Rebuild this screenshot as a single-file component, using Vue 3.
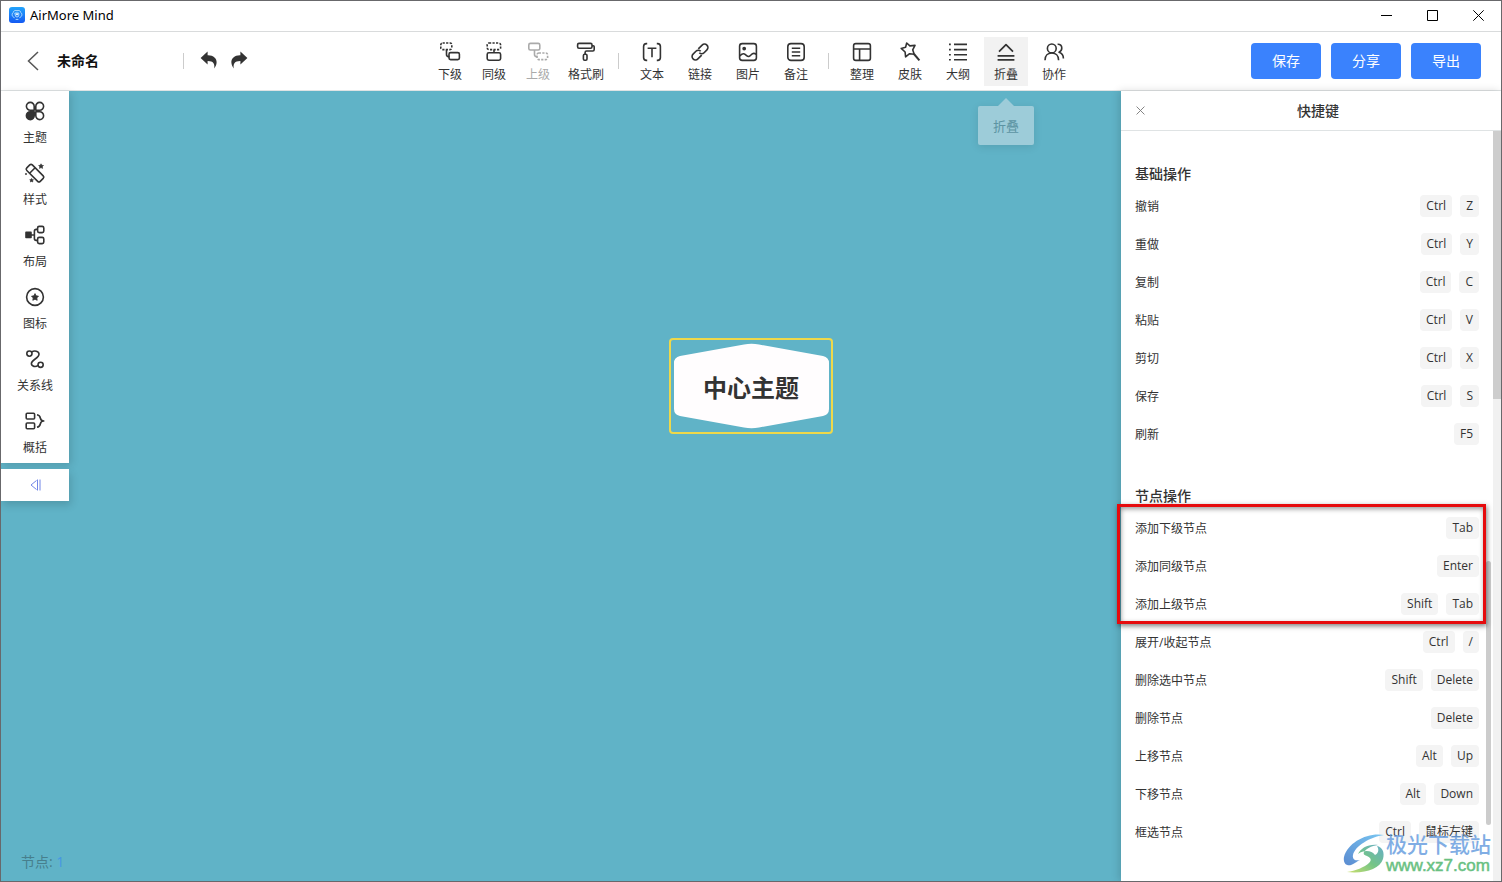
<script setup>
import { ref } from 'vue'

const docName = ref('未命名')

const toolGroups = [
  [
    { id: 'child', label: '下级' },
    { id: 'sibling', label: '同级' },
    { id: 'parent', label: '上级', disabled: true },
    { id: 'brush', label: '格式刷', wide: true },
  ],
  [
    { id: 'text', label: '文本' },
    { id: 'link', label: '链接' },
    { id: 'image', label: '图片' },
    { id: 'note', label: '备注' },
  ],
  [
    { id: 'arrange', label: '整理' },
    { id: 'skin', label: '皮肤' },
    { id: 'outline', label: '大纲' },
    { id: 'fold', label: '折叠', active: true },
    { id: 'team', label: '协作' },
  ],
]

const icons = {
  child:
    '<rect x=".8" y="1" width="11" height="6.6" rx="1.8" stroke-dasharray="2.2 1.3"/><path d="M6.5 7.800v4.800a2 2 0 0 0 2 2h1"/><rect x="9" y="10.600" width="10.400" height="7" rx="1.600"/>',
  sibling:
    '<rect x="3.200" y="1" width="13.400" height="6.600" rx="1.800" stroke-dasharray="2.2 1.3"/><path d="M10 7.800V11"/><rect x="3.200" y="10.800" width="13.400" height="7.400" rx="1.600"/>',
  parent:
    '<rect x=".8" y="1.400" width="11" height="6.600" rx="1.600"/><path d="M6.500 8v4.600a2 2 0 0 0 2 2h1"/><rect x="9" y="11" width="10.600" height="6.600" rx="1.800" stroke-dasharray="2.2 1.3"/>',
  brush:
    '<rect x="1.600" y="1.400" width="14.400" height="4.800" rx="1.400"/><path d="M16 3.800h1.200a1 1 0 0 1 1 1v2.800a1.400 1.400 0 0 1-1.400 1.400h-6.300a1.400 1.400 0 0 0-1.400 1.400V12"/><rect x="7.400" y="12.200" width="3.600" height="6" rx="1.200"/>',
  text:
    '<path d="M5.200 1.600H4.400A3 3 0 0 0 1.600 4.600v10.800a3 3 0 0 0 2.800 3h.8M14.800 1.600h.8a3 3 0 0 1 2.800 3v10.800a3 3 0 0 1-2.800 3h-.8M5.600 6.200h8.800M10 6.200v9"/>',
  link:
    '<g transform="rotate(-45 10 10)"><path d="M9 13.400H3.600a3.400 3.400 0 0 1 0-6.800h4a3.400 3.400 0 0 1 3.400 3.400"/><path d="M11 6.600h5.400a3.400 3.400 0 0 1 0 6.800h-4A3.400 3.400 0 0 1 9 10"/></g>',
  image:
    '<rect x="1.600" y="1.600" width="16.800" height="16.800" rx="2.600"/><circle cx="6.200" cy="6.600" r="1.100" fill="currentColor"/><path d="M1.800 13.800c3.600-3.400 5-1.800 6.800-.2 2 1.800 3.600.4 4.800-1 1.600-2 3.200-1.600 5-.2"/>',
  note:
    '<rect x="1.800" y="1.600" width="16.400" height="16.800" rx="3.200"/><path d="M5.800 6.200h8.400M5.800 10h8.400M5.800 13.800h8.400"/>',
  arrange:
    '<rect x="1.600" y="1.600" width="16.800" height="16.800" rx="2.200"/><path d="M1.600 7h16.800M7.600 7v11.400"/>',
  skin:
    '<path d="M6.700 1 9.900 3.900 15 3.400 12.700 7.800 14.200 12.200 9.600 11.700 5.600 14.800 5.100 10 1.200 6.400 5.600 5.200Z"/><path d="m14 12 5.400 6.400" stroke-width="2"/>',
  outline:
    '<path d="M6 2.400h13M6 7.600h13M6 12.800h13M6 17.800h13M1 2.400h1.800M1 7.600h1.800M1 12.800h1.800M1 17.800h1.800"/>',
  fold: '<path d="m3 9.600 7-7 7 7M1.600 13.800h16.800M1.600 17.800h16.800" stroke-width="1.700"/>',
  team:
    '<circle cx="7.800" cy="6.400" r="4.400"/><path d="M1 18.200c0-4.600 3-7.200 6.800-7.200s6.800 2.600 6.800 7.200M13.600 2.200c2.600-.2 4.200 1.600 4.200 3.800 0 2.400-1.400 3.600-2.800 4.200 2.800.8 4.400 3 4.400 6.200"/>',
}

const sideItems = [
  {
    label: '主题',
    icon: '<path d="M9.200 9.200H5.400A3.900 3.900 0 1 1 9.200 5.400ZM10.800 9.200V5.400a3.900 3.900 0 1 1 3.800 3.800ZM10.800 10.800h3.800a3.900 3.900 0 1 1-3.800 3.800Z"/><path d="M9.200 10.800v3.800a3.900 3.900 0 1 1-3.800-3.800Z" fill="currentColor"/>',
  },
  {
    label: '样式',
    icon: '<g transform="rotate(45 10 10)"><rect x="0.600" y="6.200" width="19" height="7.800" rx="1.800"/><path d="M6.400 6.200v7.800"/></g><path d="m16 .8.8 1.500 1.700.2-1.200 1.200.3 1.700-1.600-.8-1.500.8.300-1.700-1.200-1.200 1.700-.2ZM6.600 15.400l.6 1.200 1.300.2-.9.900.2 1.300-1.200-.6-1.200.6.200-1.300-.9-.9 1.300-.2Z" fill="currentColor" stroke-width=".6"/><circle cx="1" cy="11" r=".7" fill="currentColor" stroke-width=".6"/>',
  },
  {
    label: '布局',
    icon: '<rect x="1" y="7.400" width="5" height="5" fill="currentColor"/><path d="M6 10h3.400M12.600 4.400h-1.400a1.800 1.800 0 0 0-1.800 1.800v7.400a1.800 1.800 0 0 0 1.800 1.800h1.400"/><rect x="12.600" y="1.400" width="6.200" height="6.200" rx="1.600"/><rect x="12.600" y="12.400" width="6.200" height="6.200" rx="1.600"/>',
  },
  {
    label: '图标',
    icon: '<circle cx="10" cy="10" r="8.400"/><path d="m10 6.600 1.100 2.200 2.400.4-1.700 1.700.4 2.400-2.200-1.100-2.200 1.100.4-2.400-1.700-1.700 2.400-.4Z" fill="currentColor" stroke-width=".8"/>',
  },
  {
    label: '关系线',
    icon: '<circle cx="4.400" cy="4.600" r="2.600"/><circle cx="15.600" cy="15.800" r="2.600"/><path d="M6.600 3.200c2.800-2.200 7.200-1 7.400 1.800.3 4.200-7.600 5.600-7.600 9.600 0 3 4.400 3.800 6.600 1.600"/>',
  },
  {
    label: '概括',
    icon: '<rect x="1.200" y="2.200" width="8.400" height="5.800" rx="1"/><rect x="1.200" y="12" width="8.400" height="5.800" rx="1"/><path d="M12 3.800c2.400.4 3 1.600 3.300 3.200.3 1.600.9 3 3.500 3-2.600 0-3.200 1.400-3.500 3-.3 1.600-.9 2.800-3.300 3.200"/>',
  },
]

const basicKeys = [
  { name: '撤销', keys: ['Ctrl', 'Z'] },
  { name: '重做', keys: ['Ctrl', 'Y'] },
  { name: '复制', keys: ['Ctrl', 'C'] },
  { name: '粘贴', keys: ['Ctrl', 'V'] },
  { name: '剪切', keys: ['Ctrl', 'X'] },
  { name: '保存', keys: ['Ctrl', 'S'] },
  { name: '刷新', keys: ['F5'] },
]
const addKeys = [
  { name: '添加下级节点', keys: ['Tab'] },
  { name: '添加同级节点', keys: ['Enter'] },
  { name: '添加上级节点', keys: ['Shift', 'Tab'] },
]
const nodeKeys = [
  { name: '展开/收起节点', keys: ['Ctrl', '/'] },
  { name: '删除选中节点', keys: ['Shift', 'Delete'] },
  { name: '删除节点', keys: ['Delete'] },
  { name: '上移节点', keys: ['Alt', 'Up'] },
  { name: '下移节点', keys: ['Alt', 'Down'] },
  { name: '框选节点', keys: ['Ctrl', '鼠标左键'] },
]
const sections = [
  { title: '基础操作', groups: [{ rows: basicKeys }] },
  { title: '节点操作', groups: [{ rows: addKeys, marked: true }, { rows: nodeKeys }] },
]
</script>

<template>
  <div class="window">
    <header class="titlebar">
      <svg class="app-icon" viewBox="0 0 16 16" aria-hidden="true">
        <defs>
          <linearGradient id="app-bg" x1="0" y1="0" x2="0" y2="1">
            <stop offset="0" stop-color="#21a4fb" />
            <stop offset="1" stop-color="#1459f2" />
          </linearGradient>
        </defs>
        <rect width="16" height="16" rx="3" fill="url(#app-bg)" />
        <g fill="none" stroke="#bfe4ff" stroke-width=".9" stroke-linecap="round">
          <path d="M5.200 10.600C2.600 9.600 2.600 6.600 4.200 5.600 4.400 3.600 6.600 3 8 3.800c1.400-.8 3.600-.2 3.800 1.800 1.600 1 1.600 4-1 5" />
          <path d="M6.200 6h3.600v2.200a1.800 1.800 0 0 1-3.600 0ZM7 12.400h2" />
        </g>
        <path d="M6.800 6.400h2.400v1.800H6.800z" fill="#e6f5ff" />
      </svg>
      <span class="app-name">AirMore Mind</span>
      <div class="window-controls">
        <button type="button" aria-label="最小化">
          <svg viewBox="0 0 11 11"><path d="M0 5.500h11" /></svg>
        </button>
        <button type="button" aria-label="最大化">
          <svg viewBox="0 0 11 11"><path d="M.5.5h10v10H.5z" /></svg>
        </button>
        <button type="button" aria-label="关闭">
          <svg viewBox="0 0 11 11"><path d="m.3.300 10.400 10.400M10.700.3.300 10.700" /></svg>
        </button>
      </div>
    </header>

    <div class="toolbar">
      <div class="doc">
        <button class="back" type="button" aria-label="返回">
          <svg viewBox="0 0 12 20"><path d="M11 1 1.500 10 11 19" /></svg>
        </button>
        <input v-model="docName" class="doc-name" type="text" aria-label="文件名" />
        <span class="divider"></span>
        <button class="history" type="button" aria-label="撤销">
          <svg viewBox="0 0 18 18">
            <path d="M7.600.6v3.600c5.600-.2 9.400 3 9 7.600-.2 2-1 4-2.400 5.600.8-4.600-1-7.400-6.600-7.300v3.500L.6 7.100Z" />
          </svg>
        </button>
        <button class="history" type="button" aria-label="重做">
          <svg viewBox="0 0 18 18">
            <path d="M10.400.6v3.600c-5.600-.2-9.400 3-9 7.600.2 2 1 4 2.400 5.600-.8-4.600 1-7.400 6.600-7.300v3.500l7-6.500Z" />
          </svg>
        </button>
      </div>

      <nav class="tools" aria-label="工具">
        <template v-for="(group, g) in toolGroups" :key="g">
          <span v-if="g > 0" class="divider"></span>
          <div class="tool-group" :class="{ spaced: g > 0 }">
            <div v-for="tool in group" :key="tool.id" class="tool-slot" :class="{ wide: tool.wide }">
              <button class="tool" :class="{ active: tool.active }" type="button" :disabled="tool.disabled">
                <svg viewBox="0 0 20 20" v-html="icons[tool.id]"></svg>
                <span>{{ tool.label }}</span>
              </button>
              <div v-if="tool.active" class="tooltip" role="tooltip">{{ tool.label }}</div>
            </div>
          </div>
        </template>
      </nav>

      <div class="actions">
        <button type="button">保存</button>
        <button type="button">分享</button>
        <button type="button">导出</button>
      </div>
    </div>

    <main class="workspace">
      <div class="side">
        <nav class="side-menu" aria-label="侧栏">
          <button v-for="item in sideItems" :key="item.label" type="button">
            <svg viewBox="0 0 20 20" v-html="item.icon"></svg>
            <span>{{ item.label }}</span>
          </button>
        </nav>
        <button class="collapse" type="button" aria-label="收起侧栏">
          <svg viewBox="0 0 11 12"><path d="M6.500 1.500 1 6l5.500 4.500M7.500.5v11M10 .5v11" /></svg>
        </button>
      </div>

      <div class="node">
        <svg viewBox="0 0 155 86" preserveAspectRatio="none" aria-hidden="true">
          <path d="M6 13 70 1.500Q77.500 0 85 1.500L149 13Q155 14.500 155 20V66Q155 71.500 149 73L85 84.500Q77.500 86 70 84.500L6 73Q0 71.500 0 66V20Q0 14.500 6 13Z" />
        </svg>
        <span>中心主题</span>
      </div>

      <p class="count">节点: <b>1</b></p>

      <aside class="panel">
        <div class="panel-head">
          <button type="button" aria-label="关闭面板">
            <svg viewBox="0 0 8 8"><path d="m.5.500 7 7M7.500.5l-7 7" /></svg>
          </button>
          <h2>快捷键</h2>
        </div>
        <div class="panel-body">
          <div class="shortcuts">
            <section v-for="section in sections" :key="section.title">
              <h3>{{ section.title }}</h3>
              <div v-for="(group, i) in section.groups" :key="i" :class="{ marked: group.marked }">
                <div v-for="row in group.rows" :key="row.name" class="row">
                  <span class="row-name">{{ row.name }}</span>
                  <span class="keys"><kbd v-for="k in row.keys" :key="k">{{ k }}</kbd></span>
                </div>
              </div>
            </section>
          </div>
          <div class="inner-thumb"></div>
          <div class="scroll-track"><div class="scroll-thumb"></div></div>
        </div>
      </aside>

      <div class="watermark">
        <svg viewBox="0 0 42 42" aria-hidden="true">
          <defs>
            <linearGradient id="wm-blue" x1="0" y1="1" x2="1" y2="0">
              <stop offset="0" stop-color="#3f78c9" />
              <stop offset="1" stop-color="#62bdf0" />
            </linearGradient>
            <linearGradient id="wm-green" x1="0" y1="1" x2="1" y2="0">
              <stop offset="0" stop-color="#c3da55" />
              <stop offset=".5" stop-color="#5cbb72" />
              <stop offset="1" stop-color="#4c9fc0" />
            </linearGradient>
          </defs>
          <path d="M41 2C25-1 5 9 1 24c-1 6 2 9 7 8 5-2 6-4 9-5-4 1-8 0-7-5C12 13 27 4 41 2Z" fill="url(#wm-blue)" />
          <path d="M15 21c3-6 10-10 20-9-7 1-12 4-14 7-1 2 0 3 3 4 4 2 5 4 2 7-4 4-14 8-22 9 17 2 33-3 36-13 2-7-1-12-6-13 2 3 2 7-2 9-3-4-10-6-17-1Z" fill="url(#wm-green)" />
        </svg>
        <div>
          <span class="wm-name">极光下载站</span>
          <span class="wm-url">www.xz7.com</span>
        </div>
      </div>
    </main>
  </div>
</template>

<style>
body {
  margin: 0;
}
</style>

<style scoped>
* {
  box-sizing: border-box;
}
.window {
  display: flex;
  flex-direction: column;
  height: 100vh;
  border: 1px solid #68686b;
  background: #fff;
  color: #333;
  font: 12px/16px "Open Sans", "Noto Sans CJK SC", sans-serif;
  overflow: hidden;
}
button {
  margin: 0;
  padding: 0;
  border: 0;
  background: none;
  color: inherit;
  font: inherit;
}
svg {
  display: block;
}
.titlebar {
  display: flex;
  align-items: center;
  flex: none;
  height: 31px;
  padding: 0 0 2px 8px;
  border-bottom: 1px solid #d9dbdc;
  color: #000;
}
.app-icon {
  width: 16px;
  height: 16px;
}
.app-name {
  flex: 1;
  padding-left: 5px;
  font-family: "Noto Sans", sans-serif;
  font-size: 13px;
}
.window-controls {
  display: flex;
}
.window-controls button {
  display: grid;
  place-items: center;
  width: 46px;
  height: 28px;
}
.window-controls svg {
  width: 11px;
  height: 11px;
  fill: none;
  stroke: #000;
}
.toolbar {
  display: grid;
  grid-template-columns: 1fr auto 1fr;
  align-items: center;
  flex: none;
  height: 59px;
  padding: 0 20px 0 22px;
  border-bottom: 1px solid #dfe3e4;
}
.doc {
  display: flex;
  align-items: center;
  padding-left: 4px;
}
.back svg {
  width: 12px;
  height: 20px;
  fill: none;
  stroke: #555;
  stroke-width: 1.5;
}
.doc-name {
  width: 110px;
  margin: 0 16px 0 18px;
  padding: 0;
  border: 0;
  outline: 0;
  background: none;
  color: #111;
  font: bold 14px/20px "Open Sans", "Noto Sans CJK SC", sans-serif;
}
.divider {
  width: 1px;
  height: 16px;
  background: #ccc;
}
.history {
  margin-left: 12px;
  padding-bottom: 2px;
}
.divider + .history {
  margin-left: 16px;
}
.history svg {
  width: 18px;
  height: 18px;
  fill: #333;
}
.tools {
  display: flex;
  align-items: center;
}
.tools .divider {
  margin: 0 11px 0 10px;
}
.tool-group {
  display: flex;
}
.tool-group.spaced {
  gap: 4px;
}
.tool-slot {
  position: relative;
}
.tool-slot.wide {
  margin-left: 4px;
}
.tool {
  display: flex;
  flex-direction: column;
  align-items: center;
  gap: 5px;
  width: 44px;
  height: 49px;
  padding-top: 5px;
  white-space: nowrap;
}
.tool.active {
  background: #f2f2f2;
}
.tool:disabled {
  color: #aaa;
}
.tool svg,
.side-menu svg {
  width: 20px;
  height: 20px;
  fill: none;
  stroke: currentColor;
  stroke-width: 1.6;
  stroke-linejoin: round;
  overflow: visible;
}
.tooltip {
  position: absolute;
  z-index: 5;
  top: 69px;
  left: 50%;
  width: 56px;
  height: 39px;
  margin-left: -28px;
  border-radius: 2px;
  background: #9dccd9;
  box-shadow: 0 2px 8px rgba(0, 0, 0, 0.1);
  color: #5c94a3;
  font-size: 13px;
  line-height: 41px;
  text-align: center;
}
.tooltip::before {
  content: "";
  position: absolute;
  bottom: 100%;
  left: 20px;
  border: 8px solid transparent;
  border-top: 0;
  border-bottom-color: #9dccd9;
}
.actions {
  display: flex;
  justify-content: flex-end;
  gap: 10px;
}
.actions button {
  width: 70px;
  height: 36px;
  border-radius: 4px;
  background: #3a82fd;
  color: #fff;
  font-size: 14px;
}
.workspace {
  position: relative;
  display: flex;
  justify-content: space-between;
  flex: 1;
  min-height: 0;
  background: #60b3c7;
}
.side {
  display: flex;
  flex-direction: column;
  gap: 6px;
  width: 68px;
}
.side-menu {
  display: flex;
  flex-direction: column;
  background: #fff;
  box-shadow: 2px 2px 8px rgba(0, 0, 0, 0.15);
}
.side-menu button {
  display: flex;
  flex-direction: column;
  align-items: center;
  gap: 9px;
  height: 62px;
  padding-top: 10px;
}
.collapse {
  display: grid;
  place-items: center;
  flex: none;
  height: 32px;
  background: #fff;
  box-shadow: 2px 4px 8px rgba(0, 0, 0, 0.15);
}
.collapse svg {
  width: 11px;
  height: 12px;
  fill: none;
  stroke: #7186e8;
}
.node {
  position: absolute;
  top: 247px;
  left: 50%;
  display: grid;
  place-items: center;
  width: 164px;
  height: 96px;
  margin-left: -82px;
  border: 2px solid #eed84a;
  border-radius: 4px;
  font-size: 24px;
  font-weight: bold;
  line-height: 36px;
}
.node > * {
  grid-area: 1 / 1;
}
.node span {
  padding-top: 4px;
}
.node svg {
  width: 155px;
  height: 86px;
  fill: #fffdfe;
}
.count {
  position: absolute;
  bottom: 9px;
  left: 20px;
  margin: 0;
  color: #477f8d;
  font-size: 14px;
  line-height: 20px;
}
.count b {
  color: #4696e4;
  font-weight: normal;
}
.panel {
  display: flex;
  flex-direction: column;
  width: 380px;
  background: #fff;
  box-shadow: -2px 0 8px rgba(0, 0, 0, 0.15);
}
.panel-head {
  display: flex;
  align-items: center;
  flex: none;
  height: 40px;
  padding: 0 15px;
  border-bottom: 1px solid #dfe3e4;
}
.panel-head svg {
  width: 9px;
  height: 9px;
  fill: none;
  stroke: #777;
  stroke-width: 0.8;
}
.panel-head h2 {
  flex: 1;
  margin: 0;
  padding-left: 5px;
  font-size: 14px;
  line-height: 20px;
  text-align: center;
  font-weight: 500;
}
.panel-body {
  display: flex;
  flex: 1;
  min-height: 0;
}
.shortcuts {
  flex: 1;
  padding: 0 7px 0 14px;
}
.shortcuts section {
  padding-top: 30px;
}
.shortcuts h3 {
  margin: 0;
  font-size: 14px;
  font-weight: 500;
  line-height: 26px;
}
.row {
  display: flex;
  align-items: center;
  justify-content: space-between;
  height: 38px;
}
.row-name {
  padding-top: 2px;
}
.keys {
  display: flex;
  gap: 8px;
}
kbd {
  padding: 0 6px;
  border-radius: 4px;
  background: #f4f4f4;
  font: 12px/22px "Open Sans", "Noto Sans CJK SC", sans-serif;
}
.marked {
  position: relative;
}
.marked::after {
  content: "";
  position: absolute;
  inset: -5px -7px -1px -18px;
  border: 3px solid #e60b0d;
  box-shadow: 1px 2px 5px rgba(0, 0, 0, 0.5), inset 1px 2px 5px rgba(0, 0, 0, 0.4);
}
.inner-thumb {
  width: 5px;
  height: 264px;
  margin: 430px 2px 0 0;
  border-radius: 3px;
  background: #ccc;
}
.scroll-track {
  width: 8px;
  background: #f1f1f1;
}
.scroll-thumb {
  height: 268px;
  background: #cdcdcd;
}
.watermark {
  position: absolute;
  right: 10px;
  bottom: 5px;
  display: flex;
  align-items: center;
  gap: 1px;
  opacity: 0.85;
}
.watermark svg {
  width: 42px;
  height: 42px;
}
.watermark span {
  display: block;
}
.wm-name {
  color: #6b9fe0;
  font-size: 21px;
  font-weight: 500;
  line-height: 24px;
}
.wm-url {
  color: #4fb66d;
  font: 17px/20px "Liberation Sans", sans-serif;
  -webkit-text-stroke: 0.5px #4fb66d;
}
</style>
